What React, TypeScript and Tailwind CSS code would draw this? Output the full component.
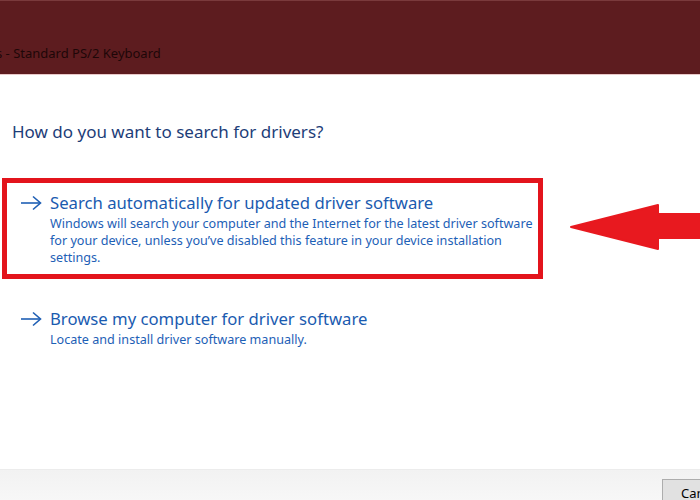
import React from "react";

function BlueArrow() {
  return (
    <svg width="22" height="16" viewBox="0 0 22 16" className="shrink-0">
      <path d="M1 8 H20" stroke="#1f5fb4" strokeWidth="1.6" fill="none" />
      <path d="M13 1.5 L20.5 8 L13 14.5" stroke="#1f5fb4" strokeWidth="1.6" fill="none" />
    </svg>
  );
}

export default function App() {
  const font = { fontFamily: '"Noto Sans", "Open Sans", sans-serif' };
  return (
    <div className="relative w-[700px] h-[500px] bg-white overflow-hidden" style={font}>
      <div className="h-[75px] bg-[#5d1c1f] border-t border-t-[#7a3a3c] border-b border-b-[#e9c9c9] flex items-end pb-[14px]">
        <span className="ml-[-4px] text-[13px] text-[#1e0708] leading-none">s - Standard PS/2 Keyboard</span>
      </div>
      <div className="pl-[12px] pt-[46px] text-[17px] leading-[21px] text-[#1d3d78]">
        How do you want to search for drivers?
      </div>
      <div className="ml-[2px] mt-[36px] w-[541px] h-[101px] border-[5px] border-[#e3141c] pl-[13px] pt-[9px]">
        <div className="flex items-center gap-[8px]">
          <BlueArrow />
          <span className="text-[16.7px] leading-[22px] text-[#1a5bb0]">Search automatically for updated driver software</span>
        </div>
        <div className="pl-[30px] pt-[1px] text-[12.6px] leading-[17px] text-[#1d60b6]">
          <div>Windows will search your computer and the Internet for the latest driver software</div>
          <div>for your device, unless you’ve disabled this feature in your device installation</div>
          <div>settings.</div>
        </div>
      </div>
      <div className="ml-[20px] mt-[29px]">
        <div className="flex items-center gap-[8px]">
          <BlueArrow />
          <span className="text-[16.7px] leading-[22px] text-[#1a5bb0]">Browse my computer for driver software</span>
        </div>
        <div className="pl-[30px] pt-[1px] text-[12.6px] leading-[17px] text-[#1d60b6]">
          Locate and install driver software manually.
        </div>
      </div>
      <div className="absolute left-0 right-0 top-[469px] bottom-0 bg-gradient-to-b from-[#f2f2f2] to-[#f7f7f7] border-t border-[#ececec]">
        <div className="absolute left-[662px] top-[9px] w-[80px] h-[30px] border border-[#adadad] bg-[#e1e1e1] text-[13px] text-black pl-[18px] pt-[4px]" style={{ fontFamily: '"Noto Sans", sans-serif' }}>
          Cancel
        </div>
      </div>
      <svg className="absolute left-[565px] top-[200px]" width="140" height="55" viewBox="565 200 140 55">
        <path d="M571 227 L658 205 L658 214 L705 214 L705 238 L658 238 L658 249 Z" fill="#e8191f" stroke="#e8191f" strokeWidth="2" strokeLinejoin="round" />
      </svg>
    </div>
  );
}
